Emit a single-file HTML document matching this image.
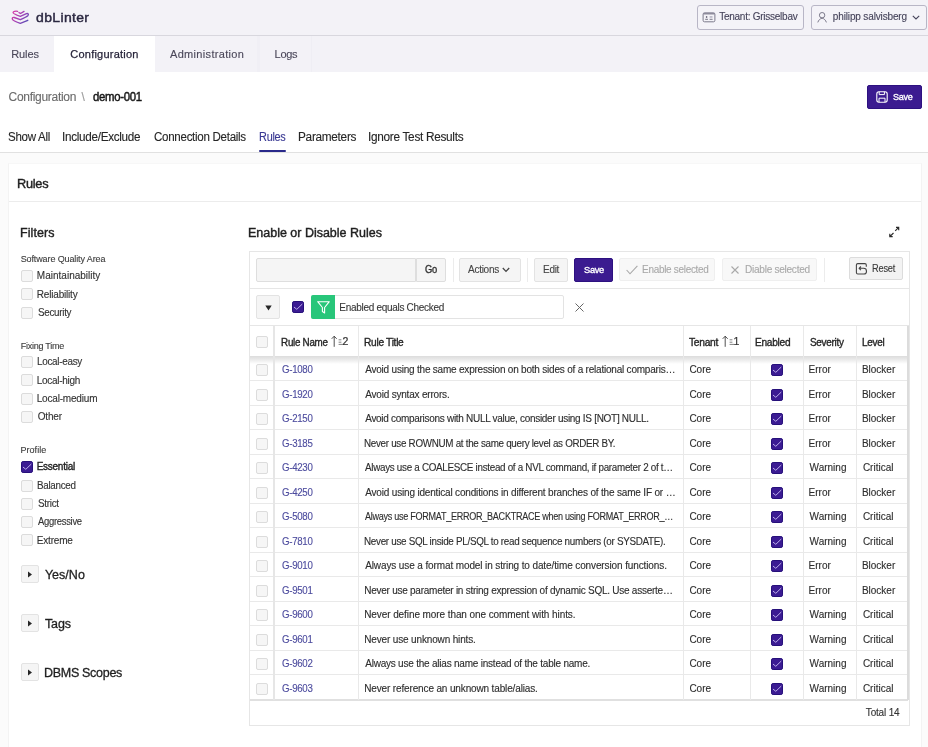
<!DOCTYPE html>
<html><head><meta charset="utf-8">
<style>
*{box-sizing:border-box;margin:0;padding:0}
html,body{width:928px;height:747px;overflow:hidden}
body{will-change:transform;font-family:"Liberation Sans",sans-serif;background:#fbfbfb;color:#262626;position:relative}
.a{position:absolute;white-space:nowrap}
.cb{position:absolute;width:12px;height:12px;border:1px solid #dcdcdc;border-radius:2px;background:#f6f6f6}
.cbp{position:absolute;width:12px;height:12px;border-radius:2px;background:#3a1b8e}
</style></head><body>
<!-- header -->
<div class="a" style="left:0;top:0;width:928px;height:36px;background:#f3f2f7;border-bottom:1px solid #d8d7de"></div>
<svg class="a" style="left:8px;top:6px" width="26" height="22" viewBox="0 0 26 22">
<defs><linearGradient id="lg" gradientUnits="userSpaceOnUse" x1="5" y1="5" x2="20" y2="17"><stop offset="0" stop-color="#d93aa6"/><stop offset="0.55" stop-color="#9a44b8"/><stop offset="1" stop-color="#4c4cb4"/></linearGradient></defs>
<g fill="none" stroke="url(#lg)" stroke-width="1.35" stroke-linecap="round" stroke-linejoin="round">
<path d="M9.6 5.3 C7.5 4.9 5 5.3 5.1 6.8 C5.2 7.8 7 8.5 12.3 10.4 L18.4 7.6 C20 7 21 8.5 19.8 9.8 C19 10.5 16 12 12.3 13.7 L6.2 11.5 C4.5 11 3.8 12.5 4.6 13.6 C5.2 14.4 8 15.8 12.3 17.3 L19.8 14.3"/>
<path d="M11 6.6 L12.6 7.5 L16 5.4"/>
</g></svg>
<div class="a" style="left:696.5px;top:5px;width:107.5px;height:24.5px;border:1px solid #b8b6c6;border-radius:3px;background:#f4f3f8"></div>
<svg class="a" style="left:701.5px;top:12px" width="14" height="11" viewBox="0 0 14 11"><rect x="1.1" y="0.9" width="11.8" height="8.9" rx="1.4" fill="none" stroke="#7b798a" stroke-width="1"/><rect x="1.1" y="0.9" width="11.8" height="1.6" fill="#8d8b9b"/><ellipse cx="4.6" cy="4.9" rx="0.8" ry="1" fill="#6c6a7c"/><path d="M3.2 7.3 H6 M7.6 7.3 H10.6" stroke="#6c6a7c" stroke-width="0.9"/><rect x="7.6" y="4.2" width="2.9" height="1.5" fill="#b3b1c0"/></svg>
<div class="a" style="left:810.5px;top:5px;width:116.5px;height:24.5px;border:1px solid #b8b6c6;border-radius:3px;background:#f4f3f8"></div>
<svg class="a" style="left:816px;top:10px" width="12" height="14" viewBox="0 0 12 14"><circle cx="6.1" cy="5.2" r="2.7" fill="none" stroke="#7b798a" stroke-width="1"/><path d="M1.8 12.4 C2.5 10.2 4 8.6 6.1 8.2 C8.2 8.6 9.7 10.2 10.4 12.4" fill="none" stroke="#7b798a" stroke-width="1"/></svg>
<svg class="a" style="left:911.5px;top:14.5px" width="8" height="5" viewBox="0 0 8 5"><path d="M0.8 0.8 L4 4 L7.2 0.8" fill="none" stroke="#45435a" stroke-width="1.1"/></svg>
<!-- nav -->
<div class="a" style="left:0;top:36px;width:928px;height:36px;background:#f3f2f7"></div>
<div class="a" style="left:54px;top:36px;width:101px;height:36px;background:#fff"></div>
<div class="a" style="left:257px;top:36px;width:3px;height:36px;background:#f0eff5"></div>
<div class="a" style="left:311px;top:36px;width:1px;height:36px;background:#efeef4"></div>
<!-- content -->
<div class="a" style="left:0;top:72px;width:928px;height:81px;background:#fff;border-bottom:1px solid #e1e1e1"></div>
<div class="a" style="left:867px;top:85px;width:55px;height:24px;background:#3b1b90;border:1px solid #2d1180;border-radius:2px"></div>
<svg class="a" style="left:876px;top:90.5px" width="12" height="12" viewBox="0 0 12 12"><rect x="0.8" y="0.8" width="10.4" height="10.4" rx="2.2" fill="none" stroke="#fff" stroke-width="1.1"/><path d="M3.2 0.8 V3.6 H8.4 V0.8 M3 11.2 V7.2 H9 V11.2" fill="none" stroke="#fff" stroke-width="1"/></svg>
<div class="a" style="left:259.4px;top:150.2px;width:26.6px;height:2px;background:#29298a;border-radius:1px"></div>
<!-- region -->
<div class="a" style="left:8px;top:163px;width:913.5px;height:600px;background:#fff;border:1px solid #f3f3f3;border-top-color:#f7f7f7"></div>
<div class="a" style="left:9px;top:201px;width:911.5px;height:1px;background:#ececec"></div>
<div class="cb" style="left:20.5px;top:270px"></div>
<div class="cb" style="left:20.5px;top:288.3px"></div>
<div class="cb" style="left:20.5px;top:306.6px"></div>
<div class="cb" style="left:20.5px;top:356px"></div>
<div class="cb" style="left:20.5px;top:374.3px"></div>
<div class="cb" style="left:20.5px;top:392.6px"></div>
<div class="cb" style="left:20.5px;top:410.9px"></div>
<div class="cb" style="left:20.5px;top:479.5px"></div>
<div class="cb" style="left:20.5px;top:497.8px"></div>
<div class="cb" style="left:20.5px;top:516.1px"></div>
<div class="cb" style="left:20.5px;top:534.4px"></div>
<svg class="a" style="left:20.5px;top:461px" width="12" height="12" viewBox="0 0 12 12"><rect x="0.5" y="0.5" width="11" height="11" rx="1.6" fill="#3b1b93" stroke="#26107a" stroke-width="1"/><path d="M2.3 6.3 L4.8 8.3 L10 3.3" fill="none" stroke="#c2b4ee" stroke-width="0.95" stroke-linecap="round" stroke-linejoin="round"/></svg>
<div class="a" style="left:20.5px;top:565px;width:18.5px;height:18px;border:1px solid #e3e3e3;border-radius:2px;background:#f5f5f5"></div>
<svg class="a" style="left:27px;top:571px" width="6" height="7" viewBox="0 0 6 7"><path d="M1 0.5 L5 3.5 L1 6.5 Z" fill="#262626"/></svg>
<div class="a" style="left:20.5px;top:614px;width:18.5px;height:18px;border:1px solid #e3e3e3;border-radius:2px;background:#f5f5f5"></div>
<svg class="a" style="left:27px;top:620px" width="6" height="7" viewBox="0 0 6 7"><path d="M1 0.5 L5 3.5 L1 6.5 Z" fill="#262626"/></svg>
<div class="a" style="left:20.5px;top:663px;width:18.5px;height:18px;border:1px solid #e3e3e3;border-radius:2px;background:#f5f5f5"></div>
<svg class="a" style="left:27px;top:669px" width="6" height="7" viewBox="0 0 6 7"><path d="M1 0.5 L5 3.5 L1 6.5 Z" fill="#262626"/></svg>
<div class="a" style="left:249px;top:250.5px;width:660.5px;height:475.5px;border:1px solid #e6e6e6;background:#fff"></div>
<div class="a" style="left:250px;top:287.5px;width:658.5px;height:1px;background:#e6e6e6"></div>
<div class="a" style="left:256px;top:257.5px;width:160px;height:24px;border:1px solid #dedede;border-radius:2px 0 0 2px;background:#f5f5f5"></div>
<div class="a" style="left:415.5px;top:257.5px;width:30.5px;height:24px;border:1px solid #dedede;border-radius:0 2px 2px 0;background:#f5f5f5"></div>
<div class="a" style="left:452.5px;top:257.5px;width:1px;height:24px;background:#ececec"></div>
<div class="a" style="left:527px;top:257.5px;width:1px;height:24px;background:#ececec"></div>
<div class="a" style="left:823.5px;top:257.5px;width:1px;height:24px;background:#ececec"></div>
<div class="a" style="left:459px;top:257.5px;width:61.5px;height:24.0px;border:1px solid #e3e3e3;border-radius:2px;background:#f5f5f5"></div>
<div class="a" style="left:534px;top:257.5px;width:34px;height:24.0px;border:1px solid #e3e3e3;border-radius:2px;background:#f5f5f5"></div>
<div class="a" style="left:574px;top:257.5px;width:38.5px;height:24px;border-radius:2px;background:#3b1b90;border:1px solid #2d1180"></div>
<div class="a" style="left:618.5px;top:258px;width:96.70000000000005px;height:23px;border:1px solid #efefef;border-radius:2px;background:#f8f8f8"></div>
<div class="a" style="left:722px;top:258px;width:95px;height:23px;border:1px solid #efefef;border-radius:2px;background:#f8f8f8"></div>
<div class="a" style="left:848.5px;top:257.3px;width:54.5px;height:23.19999999999999px;border:1px solid #dcdcdc;border-radius:2px;background:#f3f3f3"></div>
<svg class="a" style="left:501.8px;top:267px" width="8" height="6" viewBox="0 0 8 6"><path d="M0.8 1 L4 4.4 L7.2 1" fill="none" stroke="#444" stroke-width="1.25"/></svg>
<svg class="a" style="left:625.5px;top:265px" width="12" height="10" viewBox="0 0 12 10"><path d="M0.6 5 L4 8.8 L11.4 0.8" fill="none" stroke="#a9a9a9" stroke-width="1.1"/></svg>
<svg class="a" style="left:731px;top:266px" width="8" height="8" viewBox="0 0 8 8"><path d="M0.5 0.5 L7.5 7.5 M7.5 0.5 L0.5 7.5" fill="none" stroke="#a9a9a9" stroke-width="1.1"/></svg>
<svg class="a" style="left:852px;top:260px" width="18" height="18" viewBox="0 0 18 18"><path d="M14.3 6.8 V5 Q14.3 3.6 12.9 3.6 H5.8 Q4.4 3.6 4.4 5 V12.6 Q4.4 14 5.8 14 H12 C13.8 14 14.5 12.8 14.5 11.2 C14.5 9.5 13.5 8.3 11.5 8.3 H7.2 M8.9 6.5 L7.1 8.3 L8.9 10.1" fill="none" stroke="#444" stroke-width="1.1" stroke-linejoin="round"/></svg>
<svg class="a" style="left:884px;top:222px" width="20" height="20" viewBox="0 0 20 20"><path d="M12 5.3 H14.7 V8.2 M14.7 5.3 L11.2 8.9 M5.8 11.8 V14.6 H8.7 M5.8 14.6 L9.5 11" fill="none" stroke="#2a2a2a" stroke-width="1.15"/></svg>
<div class="a" style="left:256px;top:295.2px;width:23.80000000000001px;height:23.80000000000001px;border:1px solid #e3e3e3;border-radius:2px;background:#f5f5f5"></div>
<svg class="a" style="left:264.5px;top:304.5px" width="7" height="6" viewBox="0 0 7 6"><path d="M0.3 0.5 H6.7 L3.5 5.5 Z" fill="#262626"/></svg>
<svg class="a" style="left:292.2px;top:301.1px" width="12" height="12" viewBox="0 0 12 12"><rect x="0.5" y="0.5" width="11" height="11" rx="1.6" fill="#3b1b93" stroke="#26107a" stroke-width="1"/><path d="M2.3 6.3 L4.8 8.3 L10 3.3" fill="none" stroke="#c2b4ee" stroke-width="0.95" stroke-linecap="round" stroke-linejoin="round"/></svg>
<div class="a" style="left:310.5px;top:295.2px;width:253.5px;height:24px;border:1px solid #e3e3e3;border-radius:2px;background:#fff"></div>
<div class="a" style="left:310.5px;top:295.2px;width:24.5px;height:24px;border-radius:2px 0 0 2px;background:#28c67a"></div>
<svg class="a" style="left:316.5px;top:300.5px" width="13" height="13" viewBox="0 0 13 13"><path d="M0.7 0.7 H12.3 L7.6 6.5 V12 L5.4 10.5 V6.5 Z" fill="none" stroke="#fff" stroke-width="1.1" stroke-linejoin="round"/></svg>
<svg class="a" style="left:575px;top:303px" width="9" height="9" viewBox="0 0 9 9"><path d="M0.5 0.5 L8.5 8.5 M8.5 0.5 L0.5 8.5" fill="none" stroke="#666" stroke-width="1"/></svg>
<div class="a" style="left:250px;top:325px;width:658.5px;height:1px;background:#e6e6e6"></div>
<div class="a" style="left:250px;top:356px;width:657.5px;height:8px;background:linear-gradient(#dedede,#e3e3e3 25%,rgba(255,255,255,0))"></div>
<div class="a" style="left:250px;top:355.5px;width:657.5px;height:1px;background:#dedede"></div>
<div class="cb" style="left:255.8px;top:335.6px"></div>
<div class="a" style="left:250px;top:380.40px;width:657.5px;height:1px;background:#e9e9e9"></div>
<div class="a" style="left:250px;top:404.90px;width:657.5px;height:1px;background:#e9e9e9"></div>
<div class="a" style="left:250px;top:429.40px;width:657.5px;height:1px;background:#e9e9e9"></div>
<div class="a" style="left:250px;top:453.90px;width:657.5px;height:1px;background:#e9e9e9"></div>
<div class="a" style="left:250px;top:478.40px;width:657.5px;height:1px;background:#e9e9e9"></div>
<div class="a" style="left:250px;top:502.90px;width:657.5px;height:1px;background:#e9e9e9"></div>
<div class="a" style="left:250px;top:527.40px;width:657.5px;height:1px;background:#e9e9e9"></div>
<div class="a" style="left:250px;top:551.90px;width:657.5px;height:1px;background:#e9e9e9"></div>
<div class="a" style="left:250px;top:576.40px;width:657.5px;height:1px;background:#e9e9e9"></div>
<div class="a" style="left:250px;top:600.90px;width:657.5px;height:1px;background:#e9e9e9"></div>
<div class="a" style="left:250px;top:625.40px;width:657.5px;height:1px;background:#e9e9e9"></div>
<div class="a" style="left:250px;top:649.90px;width:657.5px;height:1px;background:#e9e9e9"></div>
<div class="a" style="left:250px;top:674.40px;width:657.5px;height:1px;background:#e9e9e9"></div>
<div class="a" style="left:250px;top:698.90px;width:657.5px;height:1px;background:#e9e9e9"></div>
<div class="a" style="left:250px;top:699.2px;width:658px;height:1.5px;background:#e0e0e0"></div>
<div class="a" style="left:357.8px;top:325.5px;width:1px;height:374.5px;background:#e9e9e9"></div>
<div class="a" style="left:682.7px;top:325.5px;width:1px;height:374.5px;background:#e9e9e9"></div>
<div class="a" style="left:750.0px;top:325.5px;width:1px;height:374.5px;background:#e9e9e9"></div>
<div class="a" style="left:802.8px;top:325.5px;width:1px;height:374.5px;background:#e9e9e9"></div>
<div class="a" style="left:855.8px;top:325.5px;width:1px;height:374.5px;background:#e9e9e9"></div>
<div class="a" style="left:272.5px;top:325.5px;width:2.7px;height:374.5px;background:#e6e6e6"></div>
<div class="a" style="left:907px;top:325.5px;width:1.5px;height:374.5px;background:#dcdcdc"></div>
<div class="cb" style="left:256px;top:364.40px"></div>
<svg class="a" style="left:770.6px;top:364.40px" width="12" height="12" viewBox="0 0 12 12"><rect x="0.5" y="0.5" width="11" height="11" rx="1.6" fill="#3b1b93" stroke="#26107a" stroke-width="1"/><path d="M2.3 6.3 L4.8 8.3 L10 3.3" fill="none" stroke="#c2b4ee" stroke-width="0.95" stroke-linecap="round" stroke-linejoin="round"/></svg>
<div class="cb" style="left:256px;top:388.90px"></div>
<svg class="a" style="left:770.6px;top:388.90px" width="12" height="12" viewBox="0 0 12 12"><rect x="0.5" y="0.5" width="11" height="11" rx="1.6" fill="#3b1b93" stroke="#26107a" stroke-width="1"/><path d="M2.3 6.3 L4.8 8.3 L10 3.3" fill="none" stroke="#c2b4ee" stroke-width="0.95" stroke-linecap="round" stroke-linejoin="round"/></svg>
<div class="cb" style="left:256px;top:413.40px"></div>
<svg class="a" style="left:770.6px;top:413.40px" width="12" height="12" viewBox="0 0 12 12"><rect x="0.5" y="0.5" width="11" height="11" rx="1.6" fill="#3b1b93" stroke="#26107a" stroke-width="1"/><path d="M2.3 6.3 L4.8 8.3 L10 3.3" fill="none" stroke="#c2b4ee" stroke-width="0.95" stroke-linecap="round" stroke-linejoin="round"/></svg>
<div class="cb" style="left:256px;top:437.90px"></div>
<svg class="a" style="left:770.6px;top:437.90px" width="12" height="12" viewBox="0 0 12 12"><rect x="0.5" y="0.5" width="11" height="11" rx="1.6" fill="#3b1b93" stroke="#26107a" stroke-width="1"/><path d="M2.3 6.3 L4.8 8.3 L10 3.3" fill="none" stroke="#c2b4ee" stroke-width="0.95" stroke-linecap="round" stroke-linejoin="round"/></svg>
<div class="cb" style="left:256px;top:462.40px"></div>
<svg class="a" style="left:770.6px;top:462.40px" width="12" height="12" viewBox="0 0 12 12"><rect x="0.5" y="0.5" width="11" height="11" rx="1.6" fill="#3b1b93" stroke="#26107a" stroke-width="1"/><path d="M2.3 6.3 L4.8 8.3 L10 3.3" fill="none" stroke="#c2b4ee" stroke-width="0.95" stroke-linecap="round" stroke-linejoin="round"/></svg>
<div class="cb" style="left:256px;top:486.90px"></div>
<svg class="a" style="left:770.6px;top:486.90px" width="12" height="12" viewBox="0 0 12 12"><rect x="0.5" y="0.5" width="11" height="11" rx="1.6" fill="#3b1b93" stroke="#26107a" stroke-width="1"/><path d="M2.3 6.3 L4.8 8.3 L10 3.3" fill="none" stroke="#c2b4ee" stroke-width="0.95" stroke-linecap="round" stroke-linejoin="round"/></svg>
<div class="cb" style="left:256px;top:511.40px"></div>
<svg class="a" style="left:770.6px;top:511.40px" width="12" height="12" viewBox="0 0 12 12"><rect x="0.5" y="0.5" width="11" height="11" rx="1.6" fill="#3b1b93" stroke="#26107a" stroke-width="1"/><path d="M2.3 6.3 L4.8 8.3 L10 3.3" fill="none" stroke="#c2b4ee" stroke-width="0.95" stroke-linecap="round" stroke-linejoin="round"/></svg>
<div class="cb" style="left:256px;top:535.90px"></div>
<svg class="a" style="left:770.6px;top:535.90px" width="12" height="12" viewBox="0 0 12 12"><rect x="0.5" y="0.5" width="11" height="11" rx="1.6" fill="#3b1b93" stroke="#26107a" stroke-width="1"/><path d="M2.3 6.3 L4.8 8.3 L10 3.3" fill="none" stroke="#c2b4ee" stroke-width="0.95" stroke-linecap="round" stroke-linejoin="round"/></svg>
<div class="cb" style="left:256px;top:560.40px"></div>
<svg class="a" style="left:770.6px;top:560.40px" width="12" height="12" viewBox="0 0 12 12"><rect x="0.5" y="0.5" width="11" height="11" rx="1.6" fill="#3b1b93" stroke="#26107a" stroke-width="1"/><path d="M2.3 6.3 L4.8 8.3 L10 3.3" fill="none" stroke="#c2b4ee" stroke-width="0.95" stroke-linecap="round" stroke-linejoin="round"/></svg>
<div class="cb" style="left:256px;top:584.90px"></div>
<svg class="a" style="left:770.6px;top:584.90px" width="12" height="12" viewBox="0 0 12 12"><rect x="0.5" y="0.5" width="11" height="11" rx="1.6" fill="#3b1b93" stroke="#26107a" stroke-width="1"/><path d="M2.3 6.3 L4.8 8.3 L10 3.3" fill="none" stroke="#c2b4ee" stroke-width="0.95" stroke-linecap="round" stroke-linejoin="round"/></svg>
<div class="cb" style="left:256px;top:609.40px"></div>
<svg class="a" style="left:770.6px;top:609.40px" width="12" height="12" viewBox="0 0 12 12"><rect x="0.5" y="0.5" width="11" height="11" rx="1.6" fill="#3b1b93" stroke="#26107a" stroke-width="1"/><path d="M2.3 6.3 L4.8 8.3 L10 3.3" fill="none" stroke="#c2b4ee" stroke-width="0.95" stroke-linecap="round" stroke-linejoin="round"/></svg>
<div class="cb" style="left:256px;top:633.90px"></div>
<svg class="a" style="left:770.6px;top:633.90px" width="12" height="12" viewBox="0 0 12 12"><rect x="0.5" y="0.5" width="11" height="11" rx="1.6" fill="#3b1b93" stroke="#26107a" stroke-width="1"/><path d="M2.3 6.3 L4.8 8.3 L10 3.3" fill="none" stroke="#c2b4ee" stroke-width="0.95" stroke-linecap="round" stroke-linejoin="round"/></svg>
<div class="cb" style="left:256px;top:658.40px"></div>
<svg class="a" style="left:770.6px;top:658.40px" width="12" height="12" viewBox="0 0 12 12"><rect x="0.5" y="0.5" width="11" height="11" rx="1.6" fill="#3b1b93" stroke="#26107a" stroke-width="1"/><path d="M2.3 6.3 L4.8 8.3 L10 3.3" fill="none" stroke="#c2b4ee" stroke-width="0.95" stroke-linecap="round" stroke-linejoin="round"/></svg>
<div class="cb" style="left:256px;top:682.90px"></div>
<svg class="a" style="left:770.6px;top:682.90px" width="12" height="12" viewBox="0 0 12 12"><rect x="0.5" y="0.5" width="11" height="11" rx="1.6" fill="#3b1b93" stroke="#26107a" stroke-width="1"/><path d="M2.3 6.3 L4.8 8.3 L10 3.3" fill="none" stroke="#c2b4ee" stroke-width="0.95" stroke-linecap="round" stroke-linejoin="round"/></svg>
<svg class="a" style="left:330.9px;top:335px" width="14" height="12" viewBox="0 0 14 12"><path d="M3.2 11.8 V1.3 M0.7 3.8 L3.2 1.2 L5.7 3.8" fill="none" stroke="#333" stroke-width="0.85"/><path d="M7.6 4.8 H10.4 M7.6 7.2 H10.4 M7.6 9.4 H12.2" stroke="#555" stroke-width="0.75"/></svg>
<div class="a" style="left:342.5px;top:335.8px;font-size:10.5px;line-height:10.5px;color:#333;-webkit-text-stroke:0.2px #333">2</div>
<svg class="a" style="left:721.8px;top:335px" width="14" height="12" viewBox="0 0 14 12"><path d="M3.2 11.8 V1.3 M0.7 3.8 L3.2 1.2 L5.7 3.8" fill="none" stroke="#333" stroke-width="0.85"/><path d="M7.6 4.8 H10.4 M7.6 7.2 H10.4 M7.6 9.4 H12.2" stroke="#555" stroke-width="0.75"/></svg>
<div class="a" style="left:733.4px;top:335.8px;font-size:10.5px;line-height:10.5px;color:#333;-webkit-text-stroke:0.2px #333">1</div><div class="a" style="left:36.1px;top:9.8px;font-size:14px;line-height:14px;font-weight:400;color:#2a2740;letter-spacing:0.329px;-webkit-text-stroke:0.45px #2a2740;transform:scaleY(0.9);transform-origin:0 11px">dbLinter</div>
<div class="a" style="left:719.2px;top:12.3px;font-size:10px;line-height:10px;font-weight:400;color:#45435a;letter-spacing:-0.253px;-webkit-text-stroke:0.12px #45435a">Tenant: Grisselbav</div>
<div class="a" style="left:832.8px;top:12.3px;font-size:10px;line-height:10px;font-weight:400;color:#45435a;letter-spacing:-0.141px;-webkit-text-stroke:0.12px #45435a">philipp salvisberg</div>
<div class="a" style="left:11.3px;top:48.8px;font-size:11px;line-height:11px;font-weight:400;color:#4a4759;letter-spacing:-0.125px;-webkit-text-stroke:0.12px #4a4759">Rules</div>
<div class="a" style="left:70.3px;top:48.8px;font-size:11px;line-height:11px;font-weight:400;color:#27243a;letter-spacing:0.225px;-webkit-text-stroke:0.25px #27243a">Configuration</div>
<div class="a" style="left:170px;top:48.8px;font-size:11px;line-height:11px;font-weight:400;color:#4a4759;letter-spacing:0.323px;-webkit-text-stroke:0.12px #4a4759">Administration</div>
<div class="a" style="left:274.6px;top:48.8px;font-size:11px;line-height:11px;font-weight:400;color:#4a4759;letter-spacing:-0.3px;-webkit-text-stroke:0.12px #4a4759">Logs</div>
<div class="a" style="left:8.6px;top:91px;font-size:12px;line-height:12px;font-weight:400;color:#6b6b6b;letter-spacing:-0.3px;-webkit-text-stroke:0.12px #6b6b6b">Configuration</div>
<div class="a" style="left:81.5px;top:91px;font-size:12px;line-height:12px;font-weight:400;color:#9a9a9a;letter-spacing:0.0px;-webkit-text-stroke:0.12px #9a9a9a">\</div>
<div class="a" style="left:92.7px;top:91px;font-size:12px;line-height:12px;font-weight:400;color:#161616;letter-spacing:-0.3px;-webkit-text-stroke:0.45px #161616;transform:scaleX(0.9461);transform-origin:0px 0">demo-001</div>
<div class="a" style="left:892.9px;top:92.3px;font-size:9.5px;line-height:9.5px;font-weight:400;color:#ffffff;letter-spacing:-0.3px;-webkit-text-stroke:0.35px #fff;transform:scaleX(0.9502);transform-origin:0px 0">Save</div>
<div class="a" style="left:7.6px;top:130.7px;font-size:12px;line-height:12px;font-weight:400;color:#262626;letter-spacing:-0.3px;-webkit-text-stroke:0.12px #262626;transform:scaleX(0.9604);transform-origin:1px 0">Show All</div>
<div class="a" style="left:61.8px;top:130.7px;font-size:12px;line-height:12px;font-weight:400;color:#262626;letter-spacing:-0.3px;-webkit-text-stroke:0.12px #262626;transform:scaleX(0.9749);transform-origin:1px 0">Include/Exclude</div>
<div class="a" style="left:154.1px;top:130.7px;font-size:12px;line-height:12px;font-weight:400;color:#262626;letter-spacing:-0.3px;-webkit-text-stroke:0.12px #262626;transform:scaleX(0.9635);transform-origin:0px 0">Connection Details</div>
<div class="a" style="left:258.9px;top:130.7px;font-size:12px;line-height:12px;font-weight:400;color:#3a3993;letter-spacing:-0.3px;-webkit-text-stroke:0.12px #3a3993;transform:scaleX(0.9063);transform-origin:1px 0">Rules</div>
<div class="a" style="left:298px;top:130.7px;font-size:12px;line-height:12px;font-weight:400;color:#262626;letter-spacing:-0.3px;-webkit-text-stroke:0.12px #262626;transform:scaleX(0.9846);transform-origin:1px 0">Parameters</div>
<div class="a" style="left:367.8px;top:130.7px;font-size:12px;line-height:12px;font-weight:400;color:#262626;letter-spacing:-0.3px;-webkit-text-stroke:0.12px #262626;transform:scaleX(0.9843);transform-origin:1px 0">Ignore Test Results</div>
<div class="a" style="left:16.7px;top:176.5px;font-size:13px;line-height:13px;font-weight:400;color:#1f1f1f;letter-spacing:-0.3px;-webkit-text-stroke:0.4px #1f1f1f;transform:scaleX(0.9838);transform-origin:1px 0">Rules</div>
<div class="a" style="left:19.9px;top:226.6px;font-size:12.5px;line-height:12.5px;font-weight:400;color:#1f1f1f;letter-spacing:0.1px;-webkit-text-stroke:0.4px #1f1f1f">Filters</div>
<div class="a" style="left:248px;top:227px;font-size:12.5px;line-height:12.5px;font-weight:400;color:#1f1f1f;letter-spacing:-0.009px;-webkit-text-stroke:0.4px #1f1f1f">Enable or Disable Rules</div>
<div class="a" style="left:20.7px;top:255.1px;font-size:9px;line-height:9px;font-weight:400;color:#3d3d3d;letter-spacing:-0.115px;-webkit-text-stroke:0.12px #3d3d3d">Software Quality Area</div>
<div class="a" style="left:36.8px;top:271.3px;font-size:10px;line-height:10px;font-weight:400;color:#333;letter-spacing:0.014px;-webkit-text-stroke:0.12px #333">Maintainability</div>
<div class="a" style="left:36.8px;top:289.5px;font-size:10px;line-height:10px;font-weight:400;color:#333;letter-spacing:-0.19px;-webkit-text-stroke:0.12px #333">Reliability</div>
<div class="a" style="left:37.8px;top:307.8px;font-size:10px;line-height:10px;font-weight:400;color:#333;letter-spacing:-0.3px;-webkit-text-stroke:0.12px #333;transform:scaleX(0.9853);transform-origin:0px 0">Security</div>
<div class="a" style="left:20.7px;top:341.5px;font-size:9px;line-height:9px;font-weight:400;color:#3d3d3d;letter-spacing:-0.25px;-webkit-text-stroke:0.12px #3d3d3d">Fixing Time</div>
<div class="a" style="left:36.7px;top:357.3px;font-size:10px;line-height:10px;font-weight:400;color:#333;letter-spacing:-0.3px;-webkit-text-stroke:0.12px #333;transform:scaleX(0.991);transform-origin:1px 0">Local-easy</div>
<div class="a" style="left:36.7px;top:375.6px;font-size:10px;line-height:10px;font-weight:400;color:#333;letter-spacing:-0.267px;-webkit-text-stroke:0.12px #333">Local-high</div>
<div class="a" style="left:36.7px;top:393.8px;font-size:10px;line-height:10px;font-weight:400;color:#333;letter-spacing:-0.182px;-webkit-text-stroke:0.12px #333">Local-medium</div>
<div class="a" style="left:37.7px;top:412.1px;font-size:10px;line-height:10px;font-weight:400;color:#333;letter-spacing:-0.175px;-webkit-text-stroke:0.12px #333">Other</div>
<div class="a" style="left:20.5px;top:446.2px;font-size:9px;line-height:9px;font-weight:400;color:#3d3d3d;letter-spacing:0.033px;-webkit-text-stroke:0.12px #3d3d3d">Profile</div>
<div class="a" style="left:36.7px;top:462.2px;font-size:10px;line-height:10px;font-weight:400;color:#222;letter-spacing:-0.263px;-webkit-text-stroke:0.35px #222">Essential</div>
<div class="a" style="left:36.7px;top:480.5px;font-size:10px;line-height:10px;font-weight:400;color:#333;letter-spacing:-0.3px;-webkit-text-stroke:0.12px #333;transform:scaleX(0.982);transform-origin:1px 0">Balanced</div>
<div class="a" style="left:37.7px;top:498.9px;font-size:10px;line-height:10px;font-weight:400;color:#333;letter-spacing:-0.3px;-webkit-text-stroke:0.12px #333;transform:scaleX(0.9907);transform-origin:0px 0">Strict</div>
<div class="a" style="left:37.7px;top:517.2px;font-size:10px;line-height:10px;font-weight:400;color:#333;letter-spacing:-0.3px;-webkit-text-stroke:0.12px #333;transform:scaleX(0.9429);transform-origin:0px 0">Aggressive</div>
<div class="a" style="left:36.7px;top:535.5px;font-size:10px;line-height:10px;font-weight:400;color:#333;letter-spacing:-0.167px;-webkit-text-stroke:0.12px #333">Extreme</div>
<div class="a" style="left:44.9px;top:568.5px;font-size:12.5px;line-height:12.5px;font-weight:400;color:#1f1f1f;letter-spacing:0.02px;-webkit-text-stroke:0.3px #1f1f1f">Yes/No</div>
<div class="a" style="left:44.9px;top:617.7px;font-size:12.5px;line-height:12.5px;font-weight:400;color:#1f1f1f;letter-spacing:-0.067px;-webkit-text-stroke:0.3px #1f1f1f">Tags</div>
<div class="a" style="left:44px;top:666.8px;font-size:12.5px;line-height:12.5px;font-weight:400;color:#1f1f1f;letter-spacing:-0.3px;-webkit-text-stroke:0.3px #1f1f1f">DBMS Scopes</div>
<div class="a" style="left:424.7px;top:265.3px;font-size:10px;line-height:10px;font-weight:400;color:#333;letter-spacing:-0.3px;-webkit-text-stroke:0.35px #333;transform:scaleX(0.937);transform-origin:0px 0">Go</div>
<div class="a" style="left:468.2px;top:264.3px;font-size:10.5px;line-height:10.5px;font-weight:400;color:#444;letter-spacing:-0.3px;-webkit-text-stroke:0.12px #444;transform:scaleX(0.9565);transform-origin:0px 0">Actions</div>
<div class="a" style="left:542.7px;top:264.3px;font-size:10.5px;line-height:10.5px;font-weight:400;color:#444;letter-spacing:-0.3px;-webkit-text-stroke:0.12px #444;transform:scaleX(0.9503);transform-origin:1px 0">Edit</div>
<div class="a" style="left:583.5px;top:265.3px;font-size:9.5px;line-height:9.5px;font-weight:400;color:#fff;letter-spacing:-0.3px;-webkit-text-stroke:0.35px #fff;transform:scaleX(0.9751);transform-origin:0px 0">Save</div>
<div class="a" style="left:641.8px;top:264.3px;font-size:10.5px;line-height:10.5px;font-weight:400;color:#a9a9a9;letter-spacing:-0.3px;-webkit-text-stroke:0.12px #a9a9a9;transform:scaleX(0.947);transform-origin:1px 0">Enable selected</div>
<div class="a" style="left:744.8px;top:264.3px;font-size:10.5px;line-height:10.5px;font-weight:400;color:#a9a9a9;letter-spacing:-0.3px;-webkit-text-stroke:0.12px #a9a9a9;transform:scaleX(0.9626);transform-origin:1px 0">Diable selected</div>
<div class="a" style="left:871.7px;top:262.8px;font-size:10.5px;line-height:10.5px;font-weight:400;color:#3a3a3a;letter-spacing:-0.3px;-webkit-text-stroke:0.12px #3a3a3a;transform:scaleX(0.8798);transform-origin:1px 0">Reset</div>
<div class="a" style="left:339.3px;top:303.2px;font-size:10px;line-height:10px;font-weight:400;color:#3a3a3a;letter-spacing:-0.295px;-webkit-text-stroke:0.12px #3a3a3a">Enabled equals Checked</div>
<div class="a" style="left:280.6px;top:336.5px;font-size:10.5px;line-height:10.5px;font-weight:400;color:#262626;letter-spacing:-0.3px;-webkit-text-stroke:0.35px #262626;transform:scaleX(0.9355);transform-origin:1px 0">Rule Name</div>
<div class="a" style="left:364px;top:336.5px;font-size:10.5px;line-height:10.5px;font-weight:400;color:#262626;letter-spacing:-0.3px;-webkit-text-stroke:0.35px #262626;transform:scaleX(0.9677);transform-origin:1px 0">Rule Title</div>
<div class="a" style="left:689.4px;top:336.5px;font-size:10.5px;line-height:10.5px;font-weight:400;color:#262626;letter-spacing:-0.3px;-webkit-text-stroke:0.35px #262626;transform:scaleX(0.977);transform-origin:0px 0">Tenant</div>
<div class="a" style="left:755.3px;top:336.5px;font-size:10.5px;line-height:10.5px;font-weight:400;color:#262626;letter-spacing:-0.3px;-webkit-text-stroke:0.35px #262626;transform:scaleX(0.9659);transform-origin:1px 0">Enabled</div>
<div class="a" style="left:809.6px;top:336.5px;font-size:10.5px;line-height:10.5px;font-weight:400;color:#262626;letter-spacing:-0.3px;-webkit-text-stroke:0.35px #262626;transform:scaleX(0.9471);transform-origin:0px 0">Severity</div>
<div class="a" style="left:861.9px;top:336.5px;font-size:10.5px;line-height:10.5px;font-weight:400;color:#262626;letter-spacing:-0.3px;-webkit-text-stroke:0.35px #262626;transform:scaleX(0.9474);transform-origin:1px 0">Level</div>
<div class="a" style="left:281.7px;top:365.0px;font-size:10px;line-height:10px;font-weight:400;color:#4d4c9e;letter-spacing:-0.3px;-webkit-text-stroke:0.12px #4d4c9e;transform:scaleX(0.9683);transform-origin:0px 0">G-1080</div>
<div class="a" style="left:365.2px;top:365.0px;font-size:10px;line-height:10px;font-weight:400;color:#2e2e2e;letter-spacing:-0.21px;-webkit-text-stroke:0.12px #2e2e2e">Avoid using the same expression on both sides of a relational comparis…</div>
<div class="a" style="left:689.4px;top:365.0px;font-size:10px;line-height:10px;font-weight:400;color:#2e2e2e;letter-spacing:0.0px;-webkit-text-stroke:0.12px #2e2e2e">Core</div>
<div class="a" style="left:808.6px;top:365.0px;font-size:10px;line-height:10px;font-weight:400;color:#2e2e2e;letter-spacing:0.0px;-webkit-text-stroke:0.12px #2e2e2e">Error</div>
<div class="a" style="left:861.9px;top:365.0px;font-size:10px;line-height:10px;font-weight:400;color:#2e2e2e;letter-spacing:0.0px;-webkit-text-stroke:0.12px #2e2e2e">Blocker</div>
<div class="a" style="left:281.7px;top:389.5px;font-size:10px;line-height:10px;font-weight:400;color:#4d4c9e;letter-spacing:-0.3px;-webkit-text-stroke:0.12px #4d4c9e;transform:scaleX(0.9683);transform-origin:0px 0">G-1920</div>
<div class="a" style="left:365.2px;top:389.5px;font-size:10px;line-height:10px;font-weight:400;color:#2e2e2e;letter-spacing:-0.195px;-webkit-text-stroke:0.12px #2e2e2e">Avoid syntax errors.</div>
<div class="a" style="left:689.4px;top:389.5px;font-size:10px;line-height:10px;font-weight:400;color:#2e2e2e;letter-spacing:0.0px;-webkit-text-stroke:0.12px #2e2e2e">Core</div>
<div class="a" style="left:808.6px;top:389.5px;font-size:10px;line-height:10px;font-weight:400;color:#2e2e2e;letter-spacing:0.0px;-webkit-text-stroke:0.12px #2e2e2e">Error</div>
<div class="a" style="left:861.9px;top:389.5px;font-size:10px;line-height:10px;font-weight:400;color:#2e2e2e;letter-spacing:0.0px;-webkit-text-stroke:0.12px #2e2e2e">Blocker</div>
<div class="a" style="left:281.7px;top:414.0px;font-size:10px;line-height:10px;font-weight:400;color:#4d4c9e;letter-spacing:-0.3px;-webkit-text-stroke:0.12px #4d4c9e;transform:scaleX(0.9683);transform-origin:0px 0">G-2150</div>
<div class="a" style="left:365.2px;top:414.0px;font-size:10px;line-height:10px;font-weight:400;color:#2e2e2e;letter-spacing:-0.294px;-webkit-text-stroke:0.12px #2e2e2e">Avoid comparisons with NULL value, consider using IS [NOT] NULL.</div>
<div class="a" style="left:689.4px;top:414.0px;font-size:10px;line-height:10px;font-weight:400;color:#2e2e2e;letter-spacing:0.0px;-webkit-text-stroke:0.12px #2e2e2e">Core</div>
<div class="a" style="left:808.6px;top:414.0px;font-size:10px;line-height:10px;font-weight:400;color:#2e2e2e;letter-spacing:0.0px;-webkit-text-stroke:0.12px #2e2e2e">Error</div>
<div class="a" style="left:861.9px;top:414.0px;font-size:10px;line-height:10px;font-weight:400;color:#2e2e2e;letter-spacing:0.0px;-webkit-text-stroke:0.12px #2e2e2e">Blocker</div>
<div class="a" style="left:281.7px;top:438.5px;font-size:10px;line-height:10px;font-weight:400;color:#4d4c9e;letter-spacing:-0.3px;-webkit-text-stroke:0.12px #4d4c9e;transform:scaleX(0.9683);transform-origin:0px 0">G-3185</div>
<div class="a" style="left:364.2px;top:438.5px;font-size:10px;line-height:10px;font-weight:400;color:#2e2e2e;letter-spacing:-0.3px;-webkit-text-stroke:0.12px #2e2e2e;transform:scaleX(0.9827);transform-origin:1px 0">Never use ROWNUM at the same query level as ORDER BY.</div>
<div class="a" style="left:689.4px;top:438.5px;font-size:10px;line-height:10px;font-weight:400;color:#2e2e2e;letter-spacing:0.0px;-webkit-text-stroke:0.12px #2e2e2e">Core</div>
<div class="a" style="left:808.6px;top:438.5px;font-size:10px;line-height:10px;font-weight:400;color:#2e2e2e;letter-spacing:0.0px;-webkit-text-stroke:0.12px #2e2e2e">Error</div>
<div class="a" style="left:861.9px;top:438.5px;font-size:10px;line-height:10px;font-weight:400;color:#2e2e2e;letter-spacing:0.0px;-webkit-text-stroke:0.12px #2e2e2e">Blocker</div>
<div class="a" style="left:281.7px;top:463.0px;font-size:10px;line-height:10px;font-weight:400;color:#4d4c9e;letter-spacing:-0.3px;-webkit-text-stroke:0.12px #4d4c9e;transform:scaleX(0.9683);transform-origin:0px 0">G-4230</div>
<div class="a" style="left:365.2px;top:463.0px;font-size:10px;line-height:10px;font-weight:400;color:#2e2e2e;letter-spacing:-0.3px;-webkit-text-stroke:0.12px #2e2e2e;transform:scaleX(0.9843);transform-origin:0px 0">Always use a COALESCE instead of a NVL command, if parameter 2 of t…</div>
<div class="a" style="left:689.4px;top:463.0px;font-size:10px;line-height:10px;font-weight:400;color:#2e2e2e;letter-spacing:0.0px;-webkit-text-stroke:0.12px #2e2e2e">Core</div>
<div class="a" style="left:809.6px;top:463.0px;font-size:10px;line-height:10px;font-weight:400;color:#2e2e2e;letter-spacing:0.0px;-webkit-text-stroke:0.12px #2e2e2e">Warning</div>
<div class="a" style="left:862.9px;top:463.0px;font-size:10px;line-height:10px;font-weight:400;color:#2e2e2e;letter-spacing:0.0px;-webkit-text-stroke:0.12px #2e2e2e">Critical</div>
<div class="a" style="left:281.7px;top:487.5px;font-size:10px;line-height:10px;font-weight:400;color:#4d4c9e;letter-spacing:-0.3px;-webkit-text-stroke:0.12px #4d4c9e;transform:scaleX(0.9683);transform-origin:0px 0">G-4250</div>
<div class="a" style="left:365.2px;top:487.5px;font-size:10px;line-height:10px;font-weight:400;color:#2e2e2e;letter-spacing:-0.174px;-webkit-text-stroke:0.12px #2e2e2e">Avoid using identical conditions in different branches of the same IF or …</div>
<div class="a" style="left:689.4px;top:487.5px;font-size:10px;line-height:10px;font-weight:400;color:#2e2e2e;letter-spacing:0.0px;-webkit-text-stroke:0.12px #2e2e2e">Core</div>
<div class="a" style="left:808.6px;top:487.5px;font-size:10px;line-height:10px;font-weight:400;color:#2e2e2e;letter-spacing:0.0px;-webkit-text-stroke:0.12px #2e2e2e">Error</div>
<div class="a" style="left:861.9px;top:487.5px;font-size:10px;line-height:10px;font-weight:400;color:#2e2e2e;letter-spacing:0.0px;-webkit-text-stroke:0.12px #2e2e2e">Blocker</div>
<div class="a" style="left:281.7px;top:512.0px;font-size:10px;line-height:10px;font-weight:400;color:#4d4c9e;letter-spacing:-0.3px;-webkit-text-stroke:0.12px #4d4c9e;transform:scaleX(0.9683);transform-origin:0px 0">G-5080</div>
<div class="a" style="left:365.2px;top:512.0px;font-size:10px;line-height:10px;font-weight:400;color:#2e2e2e;letter-spacing:-0.3px;-webkit-text-stroke:0.12px #2e2e2e;transform:scaleX(0.9052);transform-origin:0px 0">Always use FORMAT_ERROR_BACKTRACE when using FORMAT_ERROR_…</div>
<div class="a" style="left:689.4px;top:512.0px;font-size:10px;line-height:10px;font-weight:400;color:#2e2e2e;letter-spacing:0.0px;-webkit-text-stroke:0.12px #2e2e2e">Core</div>
<div class="a" style="left:809.6px;top:512.0px;font-size:10px;line-height:10px;font-weight:400;color:#2e2e2e;letter-spacing:0.0px;-webkit-text-stroke:0.12px #2e2e2e">Warning</div>
<div class="a" style="left:862.9px;top:512.0px;font-size:10px;line-height:10px;font-weight:400;color:#2e2e2e;letter-spacing:0.0px;-webkit-text-stroke:0.12px #2e2e2e">Critical</div>
<div class="a" style="left:281.7px;top:536.5px;font-size:10px;line-height:10px;font-weight:400;color:#4d4c9e;letter-spacing:-0.3px;-webkit-text-stroke:0.12px #4d4c9e;transform:scaleX(0.9683);transform-origin:0px 0">G-7810</div>
<div class="a" style="left:364.2px;top:536.5px;font-size:10px;line-height:10px;font-weight:400;color:#2e2e2e;letter-spacing:-0.3px;-webkit-text-stroke:0.12px #2e2e2e;transform:scaleX(0.9849);transform-origin:1px 0">Never use SQL inside PL/SQL to read sequence numbers (or SYSDATE).</div>
<div class="a" style="left:689.4px;top:536.5px;font-size:10px;line-height:10px;font-weight:400;color:#2e2e2e;letter-spacing:0.0px;-webkit-text-stroke:0.12px #2e2e2e">Core</div>
<div class="a" style="left:809.6px;top:536.5px;font-size:10px;line-height:10px;font-weight:400;color:#2e2e2e;letter-spacing:0.0px;-webkit-text-stroke:0.12px #2e2e2e">Warning</div>
<div class="a" style="left:862.9px;top:536.5px;font-size:10px;line-height:10px;font-weight:400;color:#2e2e2e;letter-spacing:0.0px;-webkit-text-stroke:0.12px #2e2e2e">Critical</div>
<div class="a" style="left:281.7px;top:561.0px;font-size:10px;line-height:10px;font-weight:400;color:#4d4c9e;letter-spacing:-0.3px;-webkit-text-stroke:0.12px #4d4c9e;transform:scaleX(0.9683);transform-origin:0px 0">G-9010</div>
<div class="a" style="left:365.2px;top:561.0px;font-size:10px;line-height:10px;font-weight:400;color:#2e2e2e;letter-spacing:-0.114px;-webkit-text-stroke:0.12px #2e2e2e">Always use a format model in string to date/time conversion functions.</div>
<div class="a" style="left:689.4px;top:561.0px;font-size:10px;line-height:10px;font-weight:400;color:#2e2e2e;letter-spacing:0.0px;-webkit-text-stroke:0.12px #2e2e2e">Core</div>
<div class="a" style="left:808.6px;top:561.0px;font-size:10px;line-height:10px;font-weight:400;color:#2e2e2e;letter-spacing:0.0px;-webkit-text-stroke:0.12px #2e2e2e">Error</div>
<div class="a" style="left:861.9px;top:561.0px;font-size:10px;line-height:10px;font-weight:400;color:#2e2e2e;letter-spacing:0.0px;-webkit-text-stroke:0.12px #2e2e2e">Blocker</div>
<div class="a" style="left:281.7px;top:585.5px;font-size:10px;line-height:10px;font-weight:400;color:#4d4c9e;letter-spacing:-0.3px;-webkit-text-stroke:0.12px #4d4c9e;transform:scaleX(0.9683);transform-origin:0px 0">G-9501</div>
<div class="a" style="left:364.2px;top:585.5px;font-size:10px;line-height:10px;font-weight:400;color:#2e2e2e;letter-spacing:-0.25px;-webkit-text-stroke:0.12px #2e2e2e">Never use parameter in string expression of dynamic SQL. Use asserte…</div>
<div class="a" style="left:689.4px;top:585.5px;font-size:10px;line-height:10px;font-weight:400;color:#2e2e2e;letter-spacing:0.0px;-webkit-text-stroke:0.12px #2e2e2e">Core</div>
<div class="a" style="left:808.6px;top:585.5px;font-size:10px;line-height:10px;font-weight:400;color:#2e2e2e;letter-spacing:0.0px;-webkit-text-stroke:0.12px #2e2e2e">Error</div>
<div class="a" style="left:861.9px;top:585.5px;font-size:10px;line-height:10px;font-weight:400;color:#2e2e2e;letter-spacing:0.0px;-webkit-text-stroke:0.12px #2e2e2e">Blocker</div>
<div class="a" style="left:281.7px;top:610.0px;font-size:10px;line-height:10px;font-weight:400;color:#4d4c9e;letter-spacing:-0.3px;-webkit-text-stroke:0.12px #4d4c9e;transform:scaleX(0.9683);transform-origin:0px 0">G-9600</div>
<div class="a" style="left:364.2px;top:610.0px;font-size:10px;line-height:10px;font-weight:400;color:#2e2e2e;letter-spacing:-0.084px;-webkit-text-stroke:0.12px #2e2e2e">Never define more than one comment with hints.</div>
<div class="a" style="left:689.4px;top:610.0px;font-size:10px;line-height:10px;font-weight:400;color:#2e2e2e;letter-spacing:0.0px;-webkit-text-stroke:0.12px #2e2e2e">Core</div>
<div class="a" style="left:809.6px;top:610.0px;font-size:10px;line-height:10px;font-weight:400;color:#2e2e2e;letter-spacing:0.0px;-webkit-text-stroke:0.12px #2e2e2e">Warning</div>
<div class="a" style="left:862.9px;top:610.0px;font-size:10px;line-height:10px;font-weight:400;color:#2e2e2e;letter-spacing:0.0px;-webkit-text-stroke:0.12px #2e2e2e">Critical</div>
<div class="a" style="left:281.7px;top:634.5px;font-size:10px;line-height:10px;font-weight:400;color:#4d4c9e;letter-spacing:-0.3px;-webkit-text-stroke:0.12px #4d4c9e;transform:scaleX(0.9683);transform-origin:0px 0">G-9601</div>
<div class="a" style="left:364.2px;top:634.5px;font-size:10px;line-height:10px;font-weight:400;color:#2e2e2e;letter-spacing:-0.148px;-webkit-text-stroke:0.12px #2e2e2e">Never use unknown hints.</div>
<div class="a" style="left:689.4px;top:634.5px;font-size:10px;line-height:10px;font-weight:400;color:#2e2e2e;letter-spacing:0.0px;-webkit-text-stroke:0.12px #2e2e2e">Core</div>
<div class="a" style="left:809.6px;top:634.5px;font-size:10px;line-height:10px;font-weight:400;color:#2e2e2e;letter-spacing:0.0px;-webkit-text-stroke:0.12px #2e2e2e">Warning</div>
<div class="a" style="left:862.9px;top:634.5px;font-size:10px;line-height:10px;font-weight:400;color:#2e2e2e;letter-spacing:0.0px;-webkit-text-stroke:0.12px #2e2e2e">Critical</div>
<div class="a" style="left:281.7px;top:659.0px;font-size:10px;line-height:10px;font-weight:400;color:#4d4c9e;letter-spacing:-0.3px;-webkit-text-stroke:0.12px #4d4c9e;transform:scaleX(0.9683);transform-origin:0px 0">G-9602</div>
<div class="a" style="left:365.2px;top:659.0px;font-size:10px;line-height:10px;font-weight:400;color:#2e2e2e;letter-spacing:-0.218px;-webkit-text-stroke:0.12px #2e2e2e">Always use the alias name instead of the table name.</div>
<div class="a" style="left:689.4px;top:659.0px;font-size:10px;line-height:10px;font-weight:400;color:#2e2e2e;letter-spacing:0.0px;-webkit-text-stroke:0.12px #2e2e2e">Core</div>
<div class="a" style="left:809.6px;top:659.0px;font-size:10px;line-height:10px;font-weight:400;color:#2e2e2e;letter-spacing:0.0px;-webkit-text-stroke:0.12px #2e2e2e">Warning</div>
<div class="a" style="left:862.9px;top:659.0px;font-size:10px;line-height:10px;font-weight:400;color:#2e2e2e;letter-spacing:0.0px;-webkit-text-stroke:0.12px #2e2e2e">Critical</div>
<div class="a" style="left:281.7px;top:683.5px;font-size:10px;line-height:10px;font-weight:400;color:#4d4c9e;letter-spacing:-0.3px;-webkit-text-stroke:0.12px #4d4c9e;transform:scaleX(0.9683);transform-origin:0px 0">G-9603</div>
<div class="a" style="left:364.2px;top:683.5px;font-size:10px;line-height:10px;font-weight:400;color:#2e2e2e;letter-spacing:-0.139px;-webkit-text-stroke:0.12px #2e2e2e">Never reference an unknown table/alias.</div>
<div class="a" style="left:689.4px;top:683.5px;font-size:10px;line-height:10px;font-weight:400;color:#2e2e2e;letter-spacing:0.0px;-webkit-text-stroke:0.12px #2e2e2e">Core</div>
<div class="a" style="left:809.6px;top:683.5px;font-size:10px;line-height:10px;font-weight:400;color:#2e2e2e;letter-spacing:0.0px;-webkit-text-stroke:0.12px #2e2e2e">Warning</div>
<div class="a" style="left:862.9px;top:683.5px;font-size:10px;line-height:10px;font-weight:400;color:#2e2e2e;letter-spacing:0.0px;-webkit-text-stroke:0.12px #2e2e2e">Critical</div>
<div class="a" style="left:865.8px;top:708px;font-size:10px;line-height:10px;font-weight:400;color:#333;letter-spacing:-0.171px;-webkit-text-stroke:0.12px #333">Total 14</div>
</body></html>
